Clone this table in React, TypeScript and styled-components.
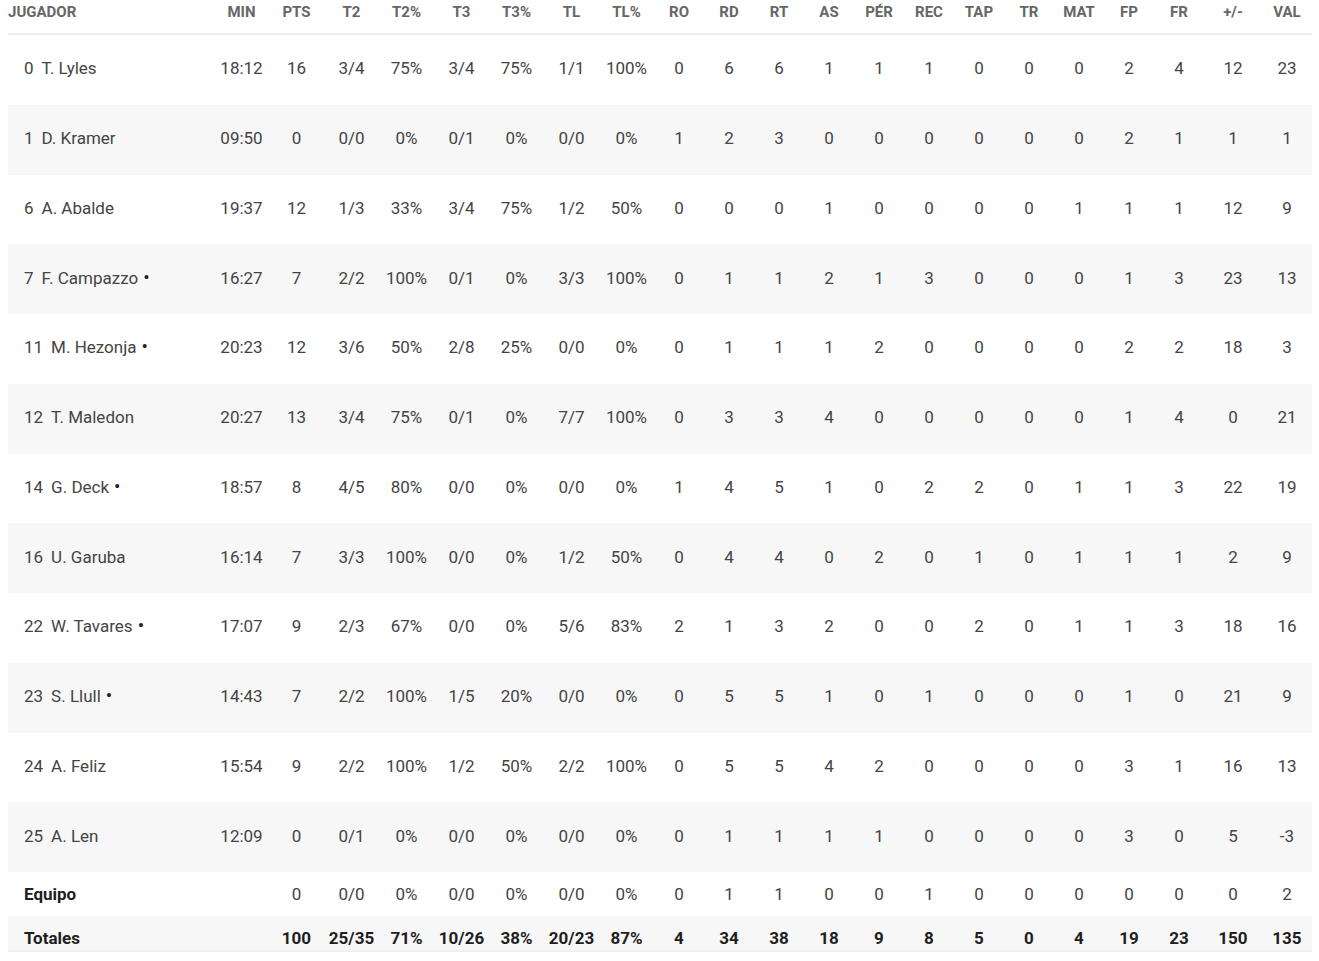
import React from "react";
import styled, { createGlobalStyle } from "styled-components";

const GlobalStyle = createGlobalStyle`
  body {
    margin: 0;
    background: #ffffff;
    font-family: Roboto, "Liberation Sans", Arial, sans-serif;
  }
`;

const columns = [
  "MIN", "PTS", "T2", "T2%", "T3", "T3%", "TL", "TL%", "RO", "RD", "RT",
  "AS", "PÉR", "REC", "TAP", "TR", "MAT", "FP", "FR", "+/-", "VAL",
];

type Player = {
  num: string;
  name: string;
  starter?: boolean;
  stats: string;
};

const players: Player[] = [
  { num: "0", name: "T. Lyles", stats: "18:12 16 3/4 75% 3/4 75% 1/1 100% 0 6 6 1 1 1 0 0 0 2 4 12 23" },
  { num: "1", name: "D. Kramer", stats: "09:50 0 0/0 0% 0/1 0% 0/0 0% 1 2 3 0 0 0 0 0 0 2 1 1 1" },
  { num: "6", name: "A. Abalde", stats: "19:37 12 1/3 33% 3/4 75% 1/2 50% 0 0 0 1 0 0 0 0 1 1 1 12 9" },
  { num: "7", name: "F. Campazzo", starter: true, stats: "16:27 7 2/2 100% 0/1 0% 3/3 100% 0 1 1 2 1 3 0 0 0 1 3 23 13" },
  { num: "11", name: "M. Hezonja", starter: true, stats: "20:23 12 3/6 50% 2/8 25% 0/0 0% 0 1 1 1 2 0 0 0 0 2 2 18 3" },
  { num: "12", name: "T. Maledon", stats: "20:27 13 3/4 75% 0/1 0% 7/7 100% 0 3 3 4 0 0 0 0 0 1 4 0 21" },
  { num: "14", name: "G. Deck", starter: true, stats: "18:57 8 4/5 80% 0/0 0% 0/0 0% 1 4 5 1 0 2 2 0 1 1 3 22 19" },
  { num: "16", name: "U. Garuba", stats: "16:14 7 3/3 100% 0/0 0% 1/2 50% 0 4 4 0 2 0 1 0 1 1 1 2 9" },
  { num: "22", name: "W. Tavares", starter: true, stats: "17:07 9 2/3 67% 0/0 0% 5/6 83% 2 1 3 2 0 0 2 0 1 1 3 18 16" },
  { num: "23", name: "S. Llull", starter: true, stats: "14:43 7 2/2 100% 1/5 20% 0/0 0% 0 5 5 1 0 1 0 0 0 1 0 21 9" },
  { num: "24", name: "A. Feliz", stats: "15:54 9 2/2 100% 1/2 50% 2/2 100% 0 5 5 4 2 0 0 0 0 3 1 16 13" },
  { num: "25", name: "A. Len", stats: "12:09 0 0/1 0% 0/0 0% 0/0 0% 0 1 1 1 1 0 0 0 0 3 0 5 -3" },
];

// first value empty: no minutes for team / totals
const team = " 0 0/0 0% 0/0 0% 0/0 0% 0 1 1 0 0 1 0 0 0 0 0 0 2";
const totals = " 100 25/35 71% 10/26 38% 20/23 87% 4 34 38 18 9 8 5 0 4 19 23 150 135";

const BoxScore: React.FC = () => {
  return (
    <Wrapper>
      <HeaderRow>
        <HeadCell $left>JUGADOR</HeadCell>
        {columns.map((c) => (
          <HeadCell key={c}>{c}</HeadCell>
        ))}
      </HeaderRow>
      {players.map((p, i) => (
        <PlayerRow key={p.num} $alt={i % 2 === 1}>
          <NameCell>
            <Dorsal>{p.num}</Dorsal>
            <span>
              {p.name}
              {p.starter && <Starter>•</Starter>}
            </span>
          </NameCell>
          {p.stats.split(" ").map((v, j) => (
            <Cell key={j}>{v}</Cell>
          ))}
        </PlayerRow>
      ))}
      <TeamRow>
        <NameCell $strong>Equipo</NameCell>
        {team.split(" ").map((v, j) => (
          <Cell key={j}>{v}</Cell>
        ))}
      </TeamRow>
      <TotalRow>
        <NameCell $strong>Totales</NameCell>
        {totals.split(" ").map((v, j) => (
          <Cell key={j} $bold>
            {v}
          </Cell>
        ))}
      </TotalRow>
    </Wrapper>
  );
};

const Wrapper = styled.div`
  width: 1304px;
  margin-left: 8px;
`;

const gridCols = "206px repeat(8, 55px) repeat(11, 50px) 58px 50px";

const HeaderRow = styled.div`
  display: grid;
  grid-template-columns: ${gridCols};
  height: 35px;
  padding-top: 3px;
  box-sizing: border-box;
  border-bottom: 2px solid #ececec;
`;

const HeadCell = styled.div<{ $left?: boolean }>`
  font-size: 15px;
  line-height: 19px;
  font-weight: 700;
  color: #666666;
  text-align: ${(p) => (p.$left ? "left" : "center")};
`;

const BaseRow = styled.div`
  display: grid;
  grid-template-columns: ${gridCols};
  align-items: center;
  font-size: 17px;
  line-height: 20px;
  color: #444444;
  box-sizing: border-box;
`;

const PlayerRow = styled(BaseRow)<{ $alt: boolean }>`
  height: 69.75px;
  padding-bottom: 3px;
  background: ${(p) => (p.$alt ? "#f7f7f7" : "#ffffff")};
`;

const TeamRow = styled(BaseRow)`
  height: 44px;
  padding-bottom: 1px;
`;

const TotalRow = styled(BaseRow)`
  height: 36px;
  align-items: end;
  padding-bottom: 2px;
  background: #f7f7f7;
  border-bottom: 2px solid #f0f0f0;
`;

const NameCell = styled.div<{ $strong?: boolean }>`
  display: flex;
  gap: 8px;
  padding-left: 16px;
  font-weight: ${(p) => (p.$strong ? 700 : 400)};
  color: ${(p) => (p.$strong ? "#1e1e1e" : "#444444")};
`;

const Dorsal = styled.span`
  color: #444444;
`;

const Starter = styled.span`
  margin-left: 5px;
  font-size: 19px;
  color: #222222;
`;

const Cell = styled.div<{ $bold?: boolean }>`
  text-align: center;
  white-space: nowrap;
  font-weight: ${(p) => (p.$bold ? 700 : 400)};
  color: ${(p) => (p.$bold ? "#1e1e1e" : "#444444")};
`;

export default function App() {
  return (
    <>
      <GlobalStyle />
      <BoxScore />
    </>
  );
}
